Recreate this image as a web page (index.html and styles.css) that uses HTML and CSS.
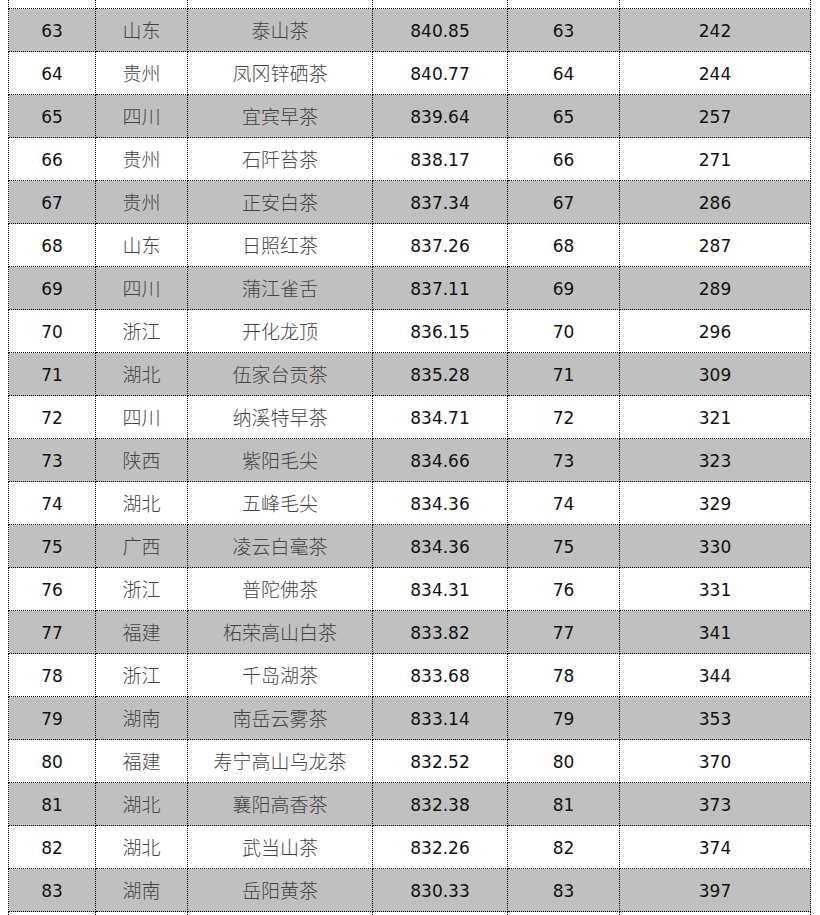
FILE: index.html
```html
<!DOCTYPE html>
<html>
<head>
<meta charset="utf-8">
<link rel="stylesheet" href="styles.css">
</head>
<body>
<table class="rank">
<colgroup>
<col class="c1"><col class="c2"><col class="c3"><col class="c4"><col class="c5"><col class="c6">
</colgroup>
<tbody>
<tr class="w"><td></td><td></td><td></td><td></td><td></td><td></td></tr>
<tr class="g"><td class="n">63</td><td class="zh">山东</td><td class="zh">泰山茶</td><td class="n">840.85</td><td class="n">63</td><td class="n">242</td></tr>
<tr class="w"><td class="n">64</td><td class="zh">贵州</td><td class="zh">凤冈锌硒茶</td><td class="n">840.77</td><td class="n">64</td><td class="n">244</td></tr>
<tr class="g"><td class="n">65</td><td class="zh">四川</td><td class="zh">宜宾早茶</td><td class="n">839.64</td><td class="n">65</td><td class="n">257</td></tr>
<tr class="w"><td class="n">66</td><td class="zh">贵州</td><td class="zh">石阡苔茶</td><td class="n">838.17</td><td class="n">66</td><td class="n">271</td></tr>
<tr class="g"><td class="n">67</td><td class="zh">贵州</td><td class="zh">正安白茶</td><td class="n">837.34</td><td class="n">67</td><td class="n">286</td></tr>
<tr class="w"><td class="n">68</td><td class="zh">山东</td><td class="zh">日照红茶</td><td class="n">837.26</td><td class="n">68</td><td class="n">287</td></tr>
<tr class="g"><td class="n">69</td><td class="zh">四川</td><td class="zh">蒲江雀舌</td><td class="n">837.11</td><td class="n">69</td><td class="n">289</td></tr>
<tr class="w"><td class="n">70</td><td class="zh">浙江</td><td class="zh">开化龙顶</td><td class="n">836.15</td><td class="n">70</td><td class="n">296</td></tr>
<tr class="g"><td class="n">71</td><td class="zh">湖北</td><td class="zh">伍家台贡茶</td><td class="n">835.28</td><td class="n">71</td><td class="n">309</td></tr>
<tr class="w"><td class="n">72</td><td class="zh">四川</td><td class="zh">纳溪特早茶</td><td class="n">834.71</td><td class="n">72</td><td class="n">321</td></tr>
<tr class="g"><td class="n">73</td><td class="zh">陕西</td><td class="zh">紫阳毛尖</td><td class="n">834.66</td><td class="n">73</td><td class="n">323</td></tr>
<tr class="w"><td class="n">74</td><td class="zh">湖北</td><td class="zh">五峰毛尖</td><td class="n">834.36</td><td class="n">74</td><td class="n">329</td></tr>
<tr class="g"><td class="n">75</td><td class="zh">广西</td><td class="zh">凌云白毫茶</td><td class="n">834.36</td><td class="n">75</td><td class="n">330</td></tr>
<tr class="w"><td class="n">76</td><td class="zh">浙江</td><td class="zh">普陀佛茶</td><td class="n">834.31</td><td class="n">76</td><td class="n">331</td></tr>
<tr class="g"><td class="n">77</td><td class="zh">福建</td><td class="zh">柘荣高山白茶</td><td class="n">833.82</td><td class="n">77</td><td class="n">341</td></tr>
<tr class="w"><td class="n">78</td><td class="zh">浙江</td><td class="zh">千岛湖茶</td><td class="n">833.68</td><td class="n">78</td><td class="n">344</td></tr>
<tr class="g"><td class="n">79</td><td class="zh">湖南</td><td class="zh">南岳云雾茶</td><td class="n">833.14</td><td class="n">79</td><td class="n">353</td></tr>
<tr class="w"><td class="n">80</td><td class="zh">福建</td><td class="zh">寿宁高山乌龙茶</td><td class="n">832.52</td><td class="n">80</td><td class="n">370</td></tr>
<tr class="g"><td class="n">81</td><td class="zh">湖北</td><td class="zh">襄阳高香茶</td><td class="n">832.38</td><td class="n">81</td><td class="n">373</td></tr>
<tr class="w"><td class="n">82</td><td class="zh">湖北</td><td class="zh">武当山茶</td><td class="n">832.26</td><td class="n">82</td><td class="n">374</td></tr>
<tr class="g"><td class="n">83</td><td class="zh">湖南</td><td class="zh">岳阳黄茶</td><td class="n">830.33</td><td class="n">83</td><td class="n">397</td></tr>
<tr class="w"><td></td><td></td><td></td><td></td><td></td><td></td></tr>
</tbody>
</table>
</body>
</html>
```
FILE: styles.css
```css
html, body {
  margin: 0;
  padding: 0;
  background: #fff;
  overflow: hidden;
  height: 915px;
}
.rank {
  margin-top: -35px;
  margin-left: 8px;
  width: 802px;
  border-collapse: collapse;
  table-layout: fixed;
}
.c1 { width: 87px; }
.c2 { width: 92px; }
.c3 { width: 185px; }
.c4 { width: 135px; }
.c5 { width: 112px; }
.c6 { width: 191px; }
.rank td {
  border: 1px dotted #000;
  height: 42px;
  padding: 0;
  text-align: center;
  vertical-align: middle;
}
.g td { background: #c0c0c0; }
.w td { background: #fff; }
.rank td.n {
  font-family: "DejaVu Sans", Verdana, sans-serif;
  font-size: 17px;
  line-height: 20px;
  height: 40px;
  padding-top: 2px;
  color: #111;
}
.rank td.zh {
  font-family: "Noto Sans CJK SC", sans-serif;
  font-size: 19px;
  font-weight: 300;
  line-height: 20px;
  height: 41px;
  padding-bottom: 1px;
  color: #444;
}
```
